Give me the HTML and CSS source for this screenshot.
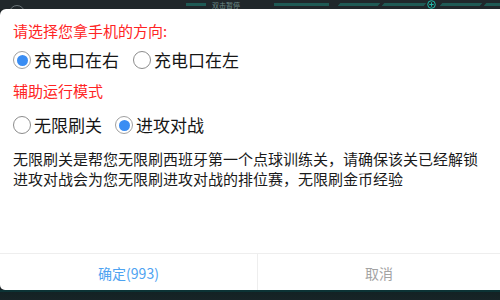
FILE: index.html
```html
<!DOCTYPE html>
<html lang="zh">
<head>
<meta charset="utf-8">
<link rel="stylesheet" href="styles.css">
</head>
<body>
<div class="screen">
  <div class="topbar">
    <span class="ring"></span>
    <span class="tbar t1"></span>
    <span class="ttext">双击暂停</span>
    <span class="tbar t2"></span>
    <span class="tbar t3"></span>
    <span class="tbar t4"></span>
    <svg class="plus" width="9" height="9" viewBox="0 0 9 9"><circle cx="4.5" cy="4.5" r="3.8" fill="none" stroke="#1fb8a8" stroke-width="1"/><path d="M4.5 2.3v4.4M2.3 4.5h4.4" stroke="#1fb8a8" stroke-width="1"/></svg>
    <span class="tbar t5"></span>
    <span class="tbar t6"></span>
  </div>
  <div class="dialog">
    <div class="title">请选择您拿手机的方向:</div>
    <div class="row row1">
      <span class="radio on"></span><span class="label">充电口在右</span>
      <span class="radio"></span><span class="label">充电口在左</span>
    </div>
    <div class="title sub">辅助运行模式</div>
    <div class="row row2">
      <span class="radio"></span><span class="label">无限刷关</span>
      <span class="radio on"></span><span class="label">进攻对战</span>
    </div>
    <div class="para">无限刷关是帮您无限刷西班牙第一个点球训练关，请确保该关已经解锁<br>进攻对战会为您无限刷进攻对战的排位赛，无限刷金币经验</div>
    <div class="footer">
      <div class="btn ok">确定(993)</div>
      <div class="btn cancel">取消</div>
    </div>
  </div>
  <div class="bottombar"></div>
</div>
</body>
</html>
```
FILE: styles.css
```css
html, body {
  margin: 0;
  padding: 0;
  width: 500px;
  height: 300px;
  overflow: hidden;
  background: #1c2326;
  font-family: "Noto Sans CJK SC", "Noto Sans", sans-serif;
}
.screen {
  display: flex;
  flex-direction: column;
  width: 500px;
  height: 300px;
}
.topbar {
  height: 9px;
  background: #20272b;
  display: flex;
  align-items: flex-start;
  overflow: hidden;
}
.ring {
  width: 16px;
  height: 16px;
  margin: 5px 0 0 9px;
  border: 1px solid #6b7478;
  border-radius: 50%;
  box-sizing: border-box;
  flex: none;
}
.tbar {
  height: 3px;
  margin-top: 3px;
  background: #1f5a55;
  flex: none;
}
.t1 { width: 20px; margin-left: 161px; }
.ttext {
  font-size: 7px;
  line-height: 8px;
  margin: 1px 0 0 6px;
  color: #6c8a88;
  flex: none;
  width: 40px;
  white-space: nowrap;
}
.t2 { width: 55px; margin-left: 22px; }
.t3 { width: 40px; margin-left: 10px; transform: skewX(-40deg); }
.t4 { width: 42px; margin-left: 4px; transform: skewX(-40deg); }
.plus {
  margin: 0 0 0 2px;
  flex: none;
}
.t5 { width: 40px; margin-left: 5px; transform: skewX(-40deg); }
.t6 { width: 32px; margin-left: 4px; transform: skewX(-40deg); }
.dialog {
  height: 281px;
  background: #ffffff;
  border-radius: 6px 0 0 5px;
  display: flex;
  flex-direction: column;
  padding-left: 13px;
  box-sizing: border-box;
}
.title {
  margin-top: 12px;
  font-size: 15px;
  line-height: 20px;
  color: #ff2424;
}
.title.sub { margin-top: 9px; }
.row {
  height: 24px;
  display: flex;
  align-items: center;
}
.row1 { margin-top: 7px; }
.row2 { margin-top: 12px; }
.radio {
  width: 18px;
  height: 18px;
  box-sizing: border-box;
  border: 1.5px solid #8c8c8c;
  border-radius: 50%;
  flex: none;
  display: flex;
  align-items: center;
  justify-content: center;
  margin-right: 3px;
}
.radio.on { border-color: #a0a0a0; }
.radio.on::after {
  content: "";
  width: 11px;
  height: 11px;
  border-radius: 50%;
  background: #3a8df3;
}
.label {
  font-size: 17px;
  line-height: 24px;
  color: #151515;
  margin-right: 14px;
}
.row2 .label { margin-right: 13px; }
.para {
  margin-top: 12px;
  font-size: 15px;
  line-height: 20px;
  color: #1a1a1a;
  white-space: nowrap;
}
.footer {
  margin-top: auto;
  margin-left: -13px;
  height: 37px;
  border-top: 1px solid #eeeeee;
  box-sizing: border-box;
  display: grid;
  grid-template-columns: 258px 1fr;
}
.btn {
  display: flex;
  align-items: center;
  justify-content: center;
  font-size: 14px;
  padding-top: 1px;
}
.ok { color: #4ea3f1; border-right: 1px solid #eeeeee; }
.cancel { color: #a3a3a3; }
.bottombar {
  flex: 1;
  background: linear-gradient(#0c3335 0, #0c3335 2px, #132224 2px, #172427 100%);
}
```
